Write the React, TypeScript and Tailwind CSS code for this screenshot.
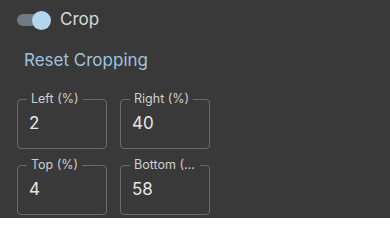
import React from "react";

function Field({ label, value }: { label: string; value: string }) {
  return (
    <div className="relative h-[50px] w-[90px] rounded border border-[#6a6a6a]">
      <span className="absolute -top-[9px] left-[9px] max-w-[70px] truncate bg-[#393939] px-[4px] text-[12.5px] leading-[16px] text-[#cfcfcf]">
        {label}
      </span>
      <div className="flex h-full items-center pl-[11px] text-[17px] text-[#e6e6e6]">{value}</div>
    </div>
  );
}

export default function App() {
  return (
    <div
      className="h-[218px] w-[390px] bg-[#393939] pl-[17px] pt-[9px]"
      style={{ fontFamily: "Inter, 'Open Sans', sans-serif" }}
    >
      <div className="flex h-[22px] items-center">
        <div className="relative h-[14px] w-[34px]">
          <div className="h-[12px] w-[32px] translate-y-[1px] rounded-full bg-[#6f7b85]" />
          <div className="absolute -top-[2px] left-[15px] h-[19px] w-[19px] rounded-full bg-[#b3d5ee]" />
        </div>
        <span className="ml-[9px] text-[17px] text-[#d9d9d9]">Crop</span>
      </div>
      <div className="mt-[17px] pl-[7px] text-[17px] text-[#9ec3df]">Reset Cropping</div>
      <div className="mt-[25px] grid w-[193px] grid-cols-2 gap-x-[13px] gap-y-[16px]">
        <Field label="Left (%)" value="2" />
        <Field label="Right (%)" value="40" />
        <Field label="Top (%)" value="4" />
        <Field label="Bottom (%)" value="58" />
      </div>
    </div>
  );
}
